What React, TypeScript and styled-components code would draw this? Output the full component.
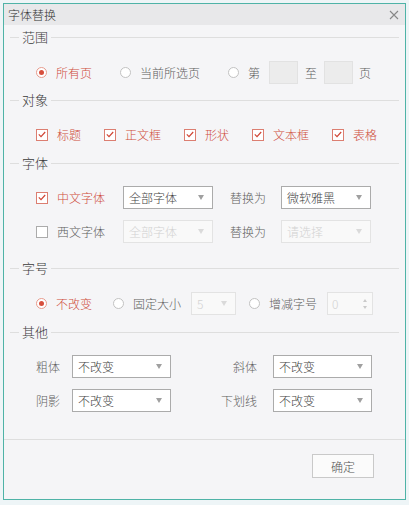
import React from "react";
import styled, { createGlobalStyle } from "styled-components";

const GlobalStyle = createGlobalStyle`
  html, body { margin: 0; padding: 0; background: #eef5f7; }
  body {
    font-family: "Noto Sans CJK SC", "Noto Sans", sans-serif;
    font-size: 12px;
    font-weight: 300;
    color: #5e5e5e;
  }
`;

const Page = styled.div`
  width: 409px;
  box-sizing: border-box;
  padding: 3px 3px 6px 3px;
`;

const Dialog = styled.div`
  width: 403px;
  box-sizing: border-box;
  border: 1px solid #4fb3a7;
  background: #f5f5f7;
`;

const TitleBar = styled.div`
  height: 21px;
  display: flex;
  align-items: center;
  justify-content: space-between;
  padding: 0 6px 0 4px;
  background: #e8e8ea;
  color: #333;
  font-size: 12px;
  line-height: 16px;
`;

const Close = styled.svg`
  width: 10px;
  height: 10px;
`;

const Body = styled.div`
  padding: 0 6px;
`;

const Header = styled.div`
  display: flex;
  align-items: center;
  height: 24px;
  gap: 3px;
  font-size: 13px;
  line-height: 16px;
  color: #3a3a3a;
  &::before {
    content: "";
    width: 9px;
    height: 1px;
    background: #dedede;
  }
  &::after {
    content: "";
    flex: 1;
    height: 1px;
    background: #dedede;
  }
`;

const Content = styled.div<{ $pt: number; $pb: number }>`
  padding: ${(p) => p.$pt}px 0 ${(p) => p.$pb}px 26px;
  display: flex;
  flex-direction: column;
  gap: 11px;
`;

const Row = styled.div<{ $gap?: number; $ml?: number }>`
  display: flex;
  align-items: center;
  height: 23px;
  gap: ${(p) => p.$gap ?? 0}px;
  margin-left: ${(p) => p.$ml ?? 0}px;
  line-height: 16px;
`;

const Option = styled.label<{ $on?: boolean; $w?: number; $mr?: number }>`
  display: flex;
  align-items: center;
  gap: 9px;
  color: ${(p) => (p.$on ? "#cf4d3c" : "#5e5e5e")};
  ${(p) => (p.$w ? `width: ${p.$w}px;` : "")}
  ${(p) => (p.$mr ? `margin-right: ${p.$mr}px;` : "")}
  white-space: nowrap;
`;

const RadioDot = styled.span<{ $on?: boolean }>`
  width: 11px;
  height: 11px;
  box-sizing: border-box;
  border-radius: 50%;
  border: 1px solid ${(p) => (p.$on ? "#e79b8d" : "#c2c2c2")};
  background: #fff;
  display: flex;
  align-items: center;
  justify-content: center;
  flex: none;
  &::after {
    content: "";
    width: 5px;
    height: 5px;
    border-radius: 50%;
    background: ${(p) => (p.$on ? "#d64e3c" : "transparent")};
  }
`;

const CheckBox = styled.span<{ $on?: boolean }>`
  width: 12px;
  height: 12px;
  box-sizing: border-box;
  border: 1px solid ${(p) => (p.$on ? "#dc7e71" : "#ababab")};
  background: #fff;
  display: flex;
  align-items: center;
  justify-content: center;
  flex: none;
`;

const Check = () => (
  <svg width="8" height="7" viewBox="0 0 8 7">
    <path d="M0.8 3.4 L3 5.6 L7.2 1" fill="none" stroke="#d04535" strokeWidth="1.2" />
  </svg>
);

const NumBox = styled.div<{ $ml: number; $mr: number }>`
  width: 29px;
  height: 23px;
  box-sizing: border-box;
  background: #ececec;
  border: 1px solid #e2e2e2;
  margin: 0 ${(p) => p.$mr}px 0 ${(p) => p.$ml}px;
`;

const Select = styled.div<{ $w: number; $off?: boolean }>`
  width: ${(p) => p.$w}px;
  height: 23px;
  box-sizing: border-box;
  flex: none;
  display: flex;
  align-items: center;
  justify-content: space-between;
  padding: 0 8px 0 5px;
  background: ${(p) => (p.$off ? "#f9f9f9" : "#fff")};
  border: 1px solid ${(p) => (p.$off ? "#e3e3e3" : "#ababab")};
  color: ${(p) => (p.$off ? "#d2d2d2" : "#444")};
  line-height: 16px;
`;

const Arrow = styled.span<{ $off?: boolean }>`
  width: 0;
  height: 0;
  border-left: 3px solid transparent;
  border-right: 3px solid transparent;
  border-top: 5px solid ${(p) => (p.$off ? "#dadada" : "#a0a0a0")};
`;

const Spin = styled.div`
  width: 46px;
  height: 23px;
  box-sizing: border-box;
  display: flex;
  align-items: center;
  justify-content: space-between;
  padding: 0 5px 0 4px;
  background: #f9f9f9;
  border: 1px solid #e3e3e3;
  color: #d2d2d2;
  margin-left: 10px;
`;

const SpinArrows = styled.span`
  display: flex;
  flex-direction: column;
  gap: 4px;
  &::before,
  &::after {
    content: "";
    width: 0;
    height: 0;
    border-left: 2.5px solid transparent;
    border-right: 2.5px solid transparent;
  }
  &::before { border-bottom: 3px solid #cacaca; }
  &::after { border-top: 3px solid #cacaca; }
`;

const ReplaceLabel = styled.span`
  margin: 0 15px 0 17px;
  white-space: nowrap;
`;

const OtherGrid = styled.div`
  display: grid;
  grid-template-columns: 24px 99px 78px 99px;
  column-gap: 12px;
  row-gap: 11px;
  align-items: center;
  line-height: 16px;
`;

const RightLabel = styled.span`
  text-align: right;
  padding-right: 4px;
  white-space: nowrap;
`;

const Footer = styled.div`
  border-top: 1px solid #dedede;
  display: flex;
  justify-content: flex-end;
  padding: 14px 31px 21px 0;
`;

const Button = styled.button`
  width: 62px;
  height: 24px;
  box-sizing: border-box;
  border: 1px solid #c9c9c9;
  background: #fbfbfb;
  color: #555;
  font-family: inherit;
  font-weight: inherit;
  font-size: 12px;
  padding: 0;
`;

const Radio = ({ on, children, mr }: { on?: boolean; children: React.ReactNode; mr?: number }) => (
  <Option $on={on} $mr={mr}>
    <RadioDot $on={on} />
    {children}
  </Option>
);

const Box = ({ on, children, w }: { on?: boolean; children: React.ReactNode; w?: number }) => (
  <Option $on={on} $w={w}>
    <CheckBox $on={on}>{on && <Check />}</CheckBox>
    {children}
  </Option>
);

const Drop = ({ w, off, children }: { w: number; off?: boolean; children: React.ReactNode }) => (
  <Select $w={w} $off={off}>
    {children}
    <Arrow $off={off} />
  </Select>
);

export default function App() {
  return (
    <>
      <GlobalStyle />
      <Page>
        <Dialog>
          <TitleBar>
            字体替换
            <Close viewBox="0 0 10 10">
              <path d="M1 1 L9 9 M9 1 L1 9" stroke="#888" strokeWidth="1.1" />
            </Close>
          </TitleBar>
          <Body>
            <Header>范围</Header>
            <Content $pt={12} $pb={4}>
              <Row $gap={28}>
                <Radio on>所有页</Radio>
                <Radio>当前所选页</Radio>
                <Row>
                  <Radio>第</Radio>
                  <NumBox $ml={9} $mr={7} />
                  至
                  <NumBox $ml={7} $mr={6} />
                  页
                </Row>
              </Row>
            </Content>

            <Header>对象</Header>
            <Content $pt={11} $pb={5}>
              <Row $gap={23}>
                <Box on>标题</Box>
                <Box on>正文框</Box>
                <Box on>形状</Box>
                <Box on>文本框</Box>
                <Box on>表格</Box>
              </Row>
            </Content>

            <Header>字体</Header>
            <Content $pt={11} $pb={13}>
              <Row>
                <Box on w={87}>中文字体</Box>
                <Drop w={90}>全部字体</Drop>
                <ReplaceLabel>替换为</ReplaceLabel>
                <Drop w={90}>微软雅黑</Drop>
              </Row>
              <Row>
                <Box w={87}>西文字体</Box>
                <Drop w={90} off>全部字体</Drop>
                <ReplaceLabel>替换为</ReplaceLabel>
                <Drop w={90} off>请选择</Drop>
              </Row>
            </Content>

            <Header>字号</Header>
            <Content $pt={12} $pb={5}>
              <Row>
                <Radio on mr={21}>不改变</Radio>
                <Radio mr={10}>固定大小</Radio>
                <Drop w={45} off>5</Drop>
                <Row $ml={13}>
                  <Radio>增减字号</Radio>
                  <Spin>
                    0
                    <SpinArrows />
                  </Spin>
                </Row>
              </Row>
            </Content>

            <Header>其他</Header>
            <Content $pt={11} $pb={27}>
              <OtherGrid>
                <span>粗体</span>
                <Drop w={99}>不改变</Drop>
                <RightLabel>斜体</RightLabel>
                <Drop w={99}>不改变</Drop>
                <span>阴影</span>
                <Drop w={99}>不改变</Drop>
                <RightLabel>下划线</RightLabel>
                <Drop w={99}>不改变</Drop>
              </OtherGrid>
            </Content>
          </Body>
          <Footer>
            <Button>确定</Button>
          </Footer>
        </Dialog>
      </Page>
    </>
  );
}
